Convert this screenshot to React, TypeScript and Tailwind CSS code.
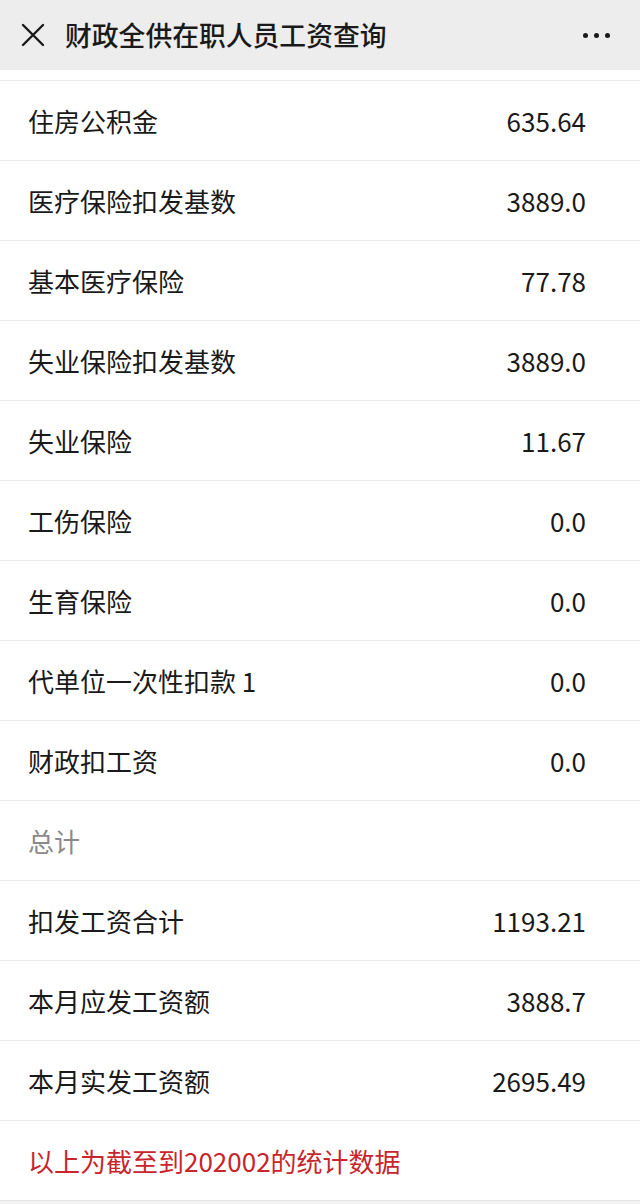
import React from 'react';

const rows: { label: string; value?: string; muted?: boolean }[] = [
  { label: '住房公积金', value: '635.64' },
  { label: '医疗保险扣发基数', value: '3889.0' },
  { label: '基本医疗保险', value: '77.78' },
  { label: '失业保险扣发基数', value: '3889.0' },
  { label: '失业保险', value: '11.67' },
  { label: '工伤保险', value: '0.0' },
  { label: '生育保险', value: '0.0' },
  { label: '代单位一次性扣款 1', value: '0.0' },
  { label: '财政扣工资', value: '0.0' },
  { label: '总计', muted: true },
  { label: '扣发工资合计', value: '1193.21' },
  { label: '本月应发工资额', value: '3888.7' },
  { label: '本月实发工资额', value: '2695.49' },
];

export default function App() {
  return (
    <div
      className="w-[640px] h-[1204px] overflow-hidden bg-[#f2f2f2] text-[#1a1a1a]"
      style={{ fontFamily: '"Noto Sans CJK SC", "Noto Sans", sans-serif' }}
    >
      {/* 顶部导航 */}
      <div className="h-[70px] bg-[#ededed] flex items-center pl-[21px] pr-[30px]">
        <svg width="24" height="24" viewBox="0 0 24 24" className="shrink-0">
          <path d="M2 2 L22 22 M22 2 L2 22" stroke="#1a1a1a" strokeWidth="2.4" strokeLinecap="round" />
        </svg>
        <div className="ml-[20px] text-[26.8px] font-medium leading-none">财政全供在职人员工资查询</div>
        <div className="ml-auto flex gap-[6px] items-center">
          <span className="w-[5px] h-[5px] rounded-full bg-[#1a1a1a]" />
          <span className="w-[5px] h-[5px] rounded-full bg-[#1a1a1a]" />
          <span className="w-[5px] h-[5px] rounded-full bg-[#1a1a1a]" />
        </div>
      </div>

      <div className="bg-white">
        <div className="h-[11px] border-b border-[#ebebeb]" />
        {rows.map((r) => (
          <div
            key={r.label}
            className="h-[80px] flex items-center justify-between pl-[28px] pr-[54px] border-b border-[#ebebeb]"
          >
            <span className={`text-[26px] leading-none ${r.muted ? 'text-[#8a8a8a]' : ''}`}>{r.label}</span>
            {r.value && <span className="text-[26px] leading-none">{r.value}</span>}
          </div>
        ))}
        <div className="h-[80px] flex items-center pl-[28px] border-b border-[#e3e3e3]">
          <span className="text-[26px] leading-none text-[#c9252c]">以上为截至到202002的统计数据</span>
        </div>
      </div>
    </div>
  );
}
